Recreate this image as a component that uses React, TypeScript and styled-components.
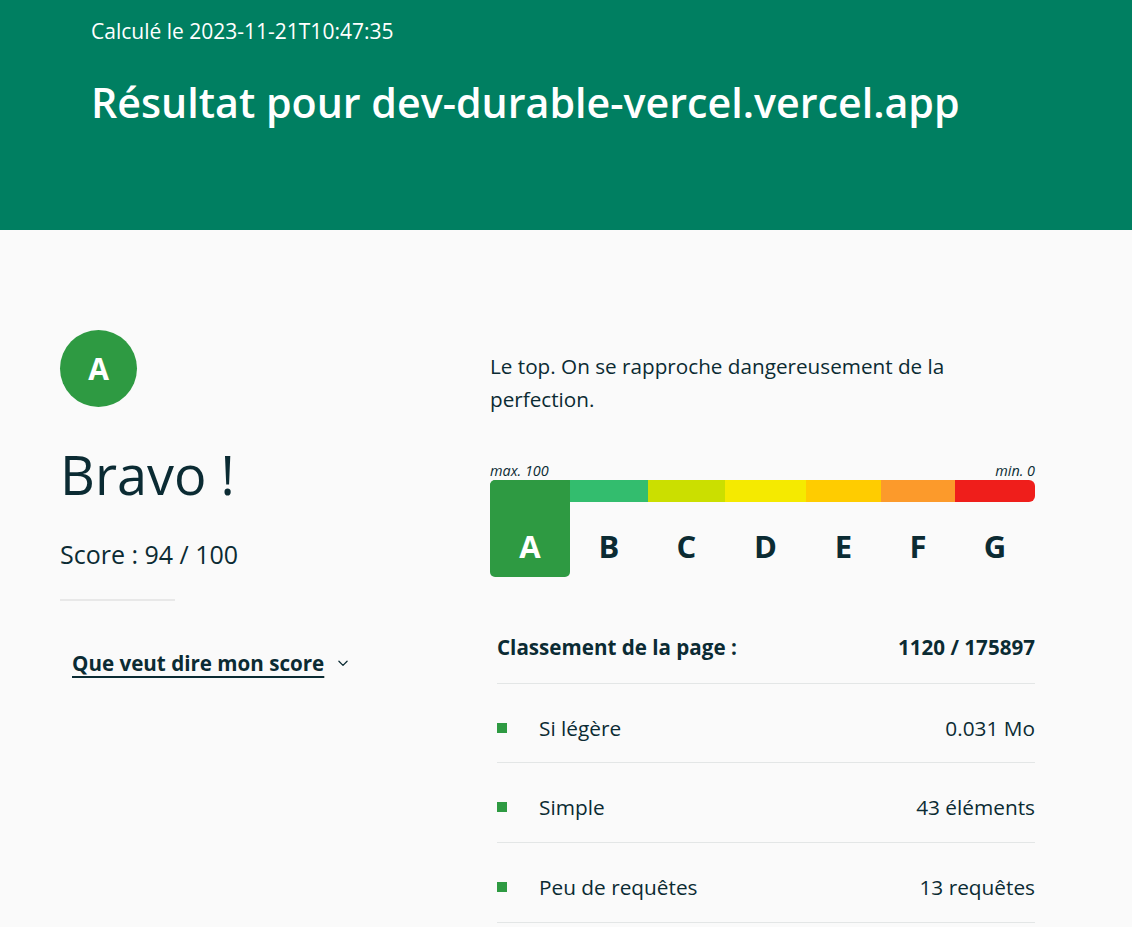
import React from 'react';
import styled, { createGlobalStyle } from 'styled-components';

const GlobalStyle = createGlobalStyle`
  * { box-sizing: border-box; }
  body {
    margin: 0;
    background: #fafafa;
    font-family: 'Open Sans', 'Noto Sans', sans-serif;
    color: #0b2b33;
  }
`;

const grades = [
  { letter: 'A', color: '#2e9a42', width: 80 },
  { letter: 'B', color: '#33bd6e', width: 78 },
  { letter: 'C', color: '#cbdf00', width: 77 },
  { letter: 'D', color: '#f5ea00', width: 81 },
  { letter: 'E', color: '#ffcc00', width: 75 },
  { letter: 'F', color: '#fc9a2b', width: 74 },
  { letter: 'G', color: '#ef1e1b', width: 80 },
];

const metrics = [
  { label: 'Si légère', value: '0.031 Mo' },
  { label: 'Simple', value: '43 éléments' },
  { label: 'Peu de requêtes', value: '13 requêtes' },
];

export default function App() {
  return (
    <>
      <GlobalStyle />
      <Header>
        <Computed>Calculé le 2023-11-21T10:47:35</Computed>
        <Title>Résultat pour dev-durable-vercel.vercel.app</Title>
      </Header>
      <Main>
        <Left>
          <Badge>A</Badge>
          <Bravo>Bravo !</Bravo>
          <Score>Score : 94 / 100</Score>
          <Divider />
          <Toggle>
            <ToggleLabel>Que veut dire mon score</ToggleLabel>
            <svg width="14" height="14" viewBox="0 0 24 24" fill="none" stroke="#0b2b33" strokeWidth="2.2" strokeLinecap="round" strokeLinejoin="round">
              <path d="M5 9l7 7 7-7" />
            </svg>
          </Toggle>
        </Left>
        <Right>
          <Intro>Le top. On se rapproche dangereusement de la perfection.</Intro>
          <ScaleLegend>
            <span>max. 100</span>
            <span>min. 0</span>
          </ScaleLegend>
          <Scale>
            {grades.map((g, i) => (
              <Grade key={g.letter} style={{ width: g.width }}>
                <Stripe $color={g.color} $first={i === 0} $last={i === grades.length - 1} />
                <GradeLetter $active={i === 0}>{g.letter}</GradeLetter>
                {i === 0 && <ActiveBlock $color={g.color}>{g.letter}</ActiveBlock>}
              </Grade>
            ))}
          </Scale>
          <Table>
            <RankRow>
              <span>Classement de la page :</span>
              <span>1120 / 175897</span>
            </RankRow>
            {metrics.map((m, i) => (
              <MetricRow key={m.label} $first={i === 0}>
                <Square />
                <MetricLabel>{m.label}</MetricLabel>
                <span>{m.value}</span>
              </MetricRow>
            ))}
          </Table>
        </Right>
      </Main>
    </>
  );
}

const Header = styled.header`
  background: #007f61;
  color: #fff;
  height: 230px;
  padding: 17px 91px 0;
`;

const Computed = styled.p`
  margin: 0;
  font-size: 21px;
  line-height: 28px;
`;

const Title = styled.h1`
  margin: 29px 0 0;
  font-size: 41.2px;
  font-weight: 600;
  line-height: 56px;
`;

const Main = styled.main`
  display: flex;
  padding: 100px 0 0 60px;
`;

const Left = styled.section`
  width: 430px;
  flex: none;
`;

const Badge = styled.div`
  width: 77px;
  height: 77px;
  border-radius: 50%;
  background: #2e9a42;
  color: #fff;
  font-weight: 700;
  font-size: 30px;
  display: flex;
  align-items: center;
  justify-content: center;
`;

const Bravo = styled.h2`
  margin: 32px 0 0;
  font-size: 54px;
  font-weight: 400;
  line-height: 70px;
`;

const Score = styled.p`
  margin: 28px 0 0;
  font-size: 25px;
  line-height: 34px;
`;

const Divider = styled.hr`
  width: 115px;
  margin: 28px 0 0;
  border: none;
  border-top: 2px solid #e8e8e8;
`;

const Toggle = styled.button`
  margin: 48px 0 0 12px;
  padding: 0;
  background: none;
  border: none;
  display: flex;
  align-items: center;
  gap: 12px;
  font-family: inherit;
  color: #0b2b33;
  cursor: pointer;
`;

const ToggleLabel = styled.span`
  font-size: 20.6px;
  font-weight: 700;
  text-decoration: underline;
  text-underline-offset: 5px;
  text-decoration-thickness: 2px;
`;

const Right = styled.section`
  width: 545px;
  padding-top: 20px;
`;

const Intro = styled.p`
  margin: 0;
  font-size: 20.7px;
  line-height: 33px;
  width: 480px;
`;

const ScaleLegend = styled.div`
  margin-top: 47px;
  display: flex;
  justify-content: space-between;
  font-size: 14.4px;
  font-style: italic;
  line-height: 16px;
`;

const Scale = styled.div`
  display: flex;
  height: 97px;
  margin-top: 1px;
`;

const Grade = styled.div`
  position: relative;
  display: flex;
  flex-direction: column;
`;

const Stripe = styled.div<{ $color: string; $first: boolean; $last: boolean }>`
  height: 22px;
  background: ${(p) => p.$color};
  border-radius: ${(p) => (p.$first ? '6px 0 0 6px' : p.$last ? '0 6px 6px 0' : '0')};
`;

const GradeLetter = styled.div<{ $active: boolean }>`
  flex: 1;
  display: flex;
  align-items: center;
  justify-content: center;
  font-size: 31px;
  font-weight: 700;
  padding-top: 12px;
  visibility: ${(p) => (p.$active ? 'hidden' : 'visible')};
`;

const ActiveBlock = styled.div<{ $color: string }>`
  position: absolute;
  inset: 0;
  background: ${(p) => p.$color};
  border-radius: 5px;
  color: #fff;
  font-size: 31px;
  font-weight: 700;
  display: flex;
  align-items: center;
  justify-content: center;
  padding-top: 34px;
`;

const Table = styled.div`
  margin: 39px 0 0 7px;
`;

const RankRow = styled.div`
  display: flex;
  justify-content: space-between;
  align-items: center;
  height: 68px;
  padding-bottom: 6px;
  border-bottom: 1px solid #e3e6e6;
  font-size: 20.6px;
  font-weight: 700;
`;

const MetricRow = styled.div<{ $first: boolean }>`
  display: flex;
  align-items: center;
  height: ${(p) => (p.$first ? 79 : 80)}px;
  padding-top: 9px;
  border-bottom: 1px solid #e3e6e6;
  font-size: 20.8px;
`;

const Square = styled.span`
  width: 10px;
  height: 10px;
  background: #2e9a42;
  flex: none;
`;

const MetricLabel = styled.span`
  flex: 1;
  margin-left: 32px;
`;
